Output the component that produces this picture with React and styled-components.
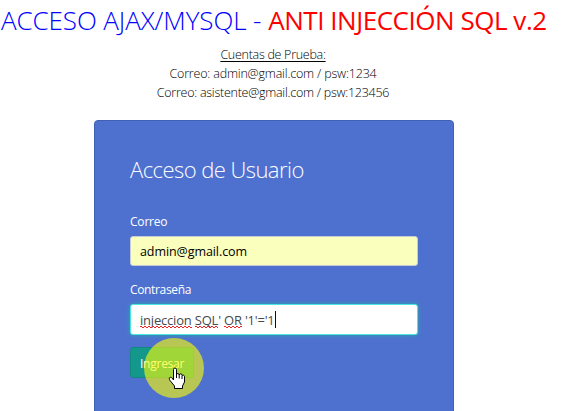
import React from 'react';
import styled, { createGlobalStyle } from 'styled-components';

const GlobalStyle = createGlobalStyle`
  * { box-sizing: border-box; }
  body { margin: 0; overflow: hidden; background: #fff; font-family: "Open Sans", "Noto Sans", sans-serif; }
`;

const Page = styled.main`
  width: 564px;
  height: 411px;
  overflow: hidden;
`;

const Title = styled.h1`
  display: flex;
  margin: 0;
  padding: 3px 0 0;
  height: 44px;
  font-size: 26px;
  line-height: 35px;
  font-weight: 300;
  white-space: pre;
`;

const TitlePart = styled.span`
  color: ${(p) => p.$color};
  font-weight: ${(p) => p.$weight};
  letter-spacing: ${(p) => p.$spacing}px;
  margin-left: ${(p) => p.$offset}px;
`;

const Accounts = styled.section`
  display: flex;
  flex-direction: column;
  align-items: center;
  width: 546px;
  height: 76px;
`;

const AccountLine = styled.p`
  margin: 0;
  height: 19px;
  font-size: 12.5px;
  line-height: 21px;
  font-weight: 300;
  color: #000;
  letter-spacing: ${(p) => p.$spacing}px;
  text-decoration: ${(p) => (p.$underlined ? 'underline' : 'none')};
  text-underline-offset: 2px;
  white-space: pre;
`;

const Card = styled.form`
  display: flex;
  flex-direction: column;
  align-items: flex-start;
  width: 360px;
  height: 310px;
  margin-left: 94px;
  padding: 34px 35px;
  border: 1px solid #4060b4;
  border-radius: 4px;
  background: #4e71cf;
  color: #fff;
`;

const CardTitle = styled.h2`
  margin: 0 0 29px;
  height: 29px;
  font-size: 22px;
  line-height: 29px;
  font-weight: 300;
  letter-spacing: -0.55px;
`;

const Label = styled.label`
  height: 23px;
  font-size: 12px;
  line-height: 18px;
  letter-spacing: ${(p) => p.$spacing}px;
`;

const Field = styled.div`
  display: flex;
  align-items: center;
  width: 288px;
  height: ${(p) => (p.$focused ? 31 : 30)}px;
  margin-bottom: ${(p) => (p.$focused ? 12 : 15)}px;
  padding: ${(p) => (p.$focused ? '0 9px' : '2px 9px 0')};
  border: 1px solid ${(p) => (p.$focused ? '#4ce6e0' : '#c5cad6')};
  border-radius: 3px;
  background: ${(p) => (p.$focused ? '#fff' : '#faffbd')};
  box-shadow: ${(p) => (p.$focused ? '0 0 4px rgba(26, 188, 156, 0.8)' : 'none')};
  color: ${(p) => (p.$focused ? '#464a4c' : '#000')};
  font-size: ${(p) => (p.$focused ? 13 : 12.5)}px;
  letter-spacing: ${(p) => (p.$focused ? -0.2 : -0.08)}px;
  line-height: 20px;
  white-space: pre;
`;

const Misspelled = styled.span`
  position: relative;
  &::after {
    content: '';
    position: absolute;
    left: 0;
    right: 0;
    bottom: 1px;
    height: 2px;
    background:
      repeating-linear-gradient(90deg, #ee2222 0 2px, transparent 2px 4px) 0 0 / 100% 1px no-repeat,
      repeating-linear-gradient(90deg, transparent 0 2px, #ee2222 2px 4px) 0 1px / 100% 1px no-repeat;
  }
`;

const Caret = styled.span`
  width: 1px;
  height: 17px;
  background: #111;
`;

const SubmitButton = styled.div`
  position: relative;
  width: 64px;
  height: 31px;
  padding: 0 9px;
  border: 1px solid #11897f;
  border-radius: 3px;
  background: #14988c;
  font-size: 12px;
  line-height: 31px;
  letter-spacing: -0.25px;
`;

const ClickHalo = styled.div`
  position: absolute;
  left: 13px;
  top: -10px;
  width: 60px;
  height: 60px;
  border-radius: 50%;
  background: rgba(255, 255, 0, 0.6);
`;

const Hand = styled.svg`
  position: absolute;
  left: 37px;
  top: 19px;
  width: 18px;
  height: 23px;
`;

export default function App() {
  return (
    <Page>
      <GlobalStyle />
      <Title>
        <TitlePart $color="#00f" $weight={300} $spacing={-0.1} $offset={1}>ACCESO AJAX/MYSQL -</TitlePart>
        <TitlePart $color="#f00" $weight={400} $spacing={-0.47} $offset={7}>ANTI INJECCIÓN SQL v.2</TitlePart>
      </Title>
      <Accounts>
        <AccountLine $spacing={-0.28} $underlined>Cuentas de Prueba:</AccountLine>
        <AccountLine $spacing={-0.18}>Correo: admin@gmail.com / psw:1234</AccountLine>
        <AccountLine $spacing={-0.26}>Correo: asistente@gmail.com / psw:123456</AccountLine>
      </Accounts>
      <Card>
        <CardTitle>Acceso de Usuario</CardTitle>
        <Label $spacing={-0.2}>Correo</Label>
        <Field>admin@gmail.com</Field>
        <Label $spacing={-0.35}>Contraseña</Label>
        <Field $focused>
          <span>
            <Misspelled>injeccion</Misspelled> <Misspelled>SQL</Misspelled>' <Misspelled>OR</Misspelled> '1'='1
          </span>
          <Caret />
        </Field>
        <SubmitButton role="button">
          Ingresar
          <ClickHalo />
          <Hand viewBox="0 0 18 23">
            <path
              d="M5.500 13V2.500a1.500 1.500 0 0 1 3 0V7.500a1.400 1.400 0 0 1 2.700.400 1.400 1.400 0 0 1 2.800.800 1.400 1.400 0 0 1 2.500 1V15l-2 4v2.500H6.500V19L2 13.500c-1-1.500-1-3 .300-3.200C3.600 10.100 4.500 11.500 5.500 13z"
              fill="#fff" stroke="#000" strokeLinejoin="round"
            />
            <path d="M8.500 7v4M11.200 8v3.500M14 9v3" stroke="#000" fill="none" />
          </Hand>
        </SubmitButton>
      </Card>
    </Page>
  );
}
